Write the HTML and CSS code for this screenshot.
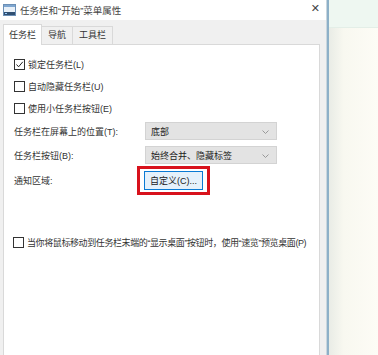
FILE: index.html
```html
<!DOCTYPE html>
<html>
<head>
<meta charset="utf-8">
<title>任务栏和“开始”菜单属性</title>
<link rel="stylesheet" href="styles.css">
</head>
<body>
<div class="screen">
  <div class="dialog">
    <div class="titlebar">
      <svg class="appicon" width="13" height="12" viewBox="0 0 13 12">
        <rect x="0.5" y="0.5" width="12" height="11" fill="#e8f0f8" stroke="#6b8fb5"/>
        <rect x="1" y="1" width="11" height="2" fill="#7ea6d0"/>
        <rect x="1" y="8" width="11" height="3" fill="#2f4f72"/>
        <rect x="2" y="9" width="2" height="1" fill="#9fd0ff"/>
      </svg>
      <span class="title">任务栏和“开始”菜单属性</span>
      <span class="close">✕</span>
    </div>
    <div class="body">
      <div class="tabs">
        <span class="tab active">任务栏</span>
        <span class="tab">导航</span>
        <span class="tab">工具栏</span>
      </div>
      <div class="panel">
        <div class="check"><span class="box"><svg width="9" height="9" viewBox="0 0 9 9"><path d="M1.5 4.5 L3.6 6.8 L7.8 1.8" fill="none" stroke="#222" stroke-width="1"/></svg></span>锁定任务栏(L)</div>
        <div class="check"><span class="box"></span>自动隐藏任务栏(U)</div>
        <div class="check"><span class="box"></span>使用小任务栏按钮(E)</div>

        <div class="row">
          <span class="label">任务栏在屏幕上的位置(T):</span>
          <span class="select">底部<svg class="chev" width="7" height="4" viewBox="0 0 7 4"><path d="M0.5 0.5 L3.5 3.5 L6.5 0.5" fill="none" stroke="#999"/></svg></span>
        </div>
        <div class="row">
          <span class="label">任务栏按钮(B):</span>
          <span class="select">始终合并、隐藏标签<svg class="chev" width="7" height="4" viewBox="0 0 7 4"><path d="M0.5 0.5 L3.5 3.5 L6.5 0.5" fill="none" stroke="#999"/></svg></span>
        </div>
        <div class="row notify">
          <span class="label">通知区域:</span>
          <span class="highlight"><span class="button">自定义(C)...</span></span>
        </div>

        <div class="check peek"><span class="box"></span>当你将鼠标移动到任务栏末端的“显示桌面”按钮时，使用“速览”预览桌面(P)</div>
      </div>
    </div>
  </div>
  <div class="edge"></div>
  <div class="outside">
    <div class="strip"></div>
  </div>
</div>
</body>
</html>
```
FILE: styles.css
```css
html, body {
	margin: 0;
	height: 100%;
	overflow: hidden;
}

body {
	font-family: "Liberation Sans", "Noto Sans CJK SC", sans-serif;
	font-size: 9px;
	color: #333;
}

.screen {
	display: flex;
	height: 355px;
}

.dialog {
	width: 326px;
	display: flex;
	flex-direction: column;
	background: #f0f0f0;
}

.titlebar {
	height: 20px;
	background: #fff;
	display: flex;
	align-items: center;
	padding-left: 3px;
	position: relative;
}

.appicon {
	margin-right: 4px;
}

.title {
	font-size: 9.5px;
	color: #444;
}

.close {
	position: absolute;
	right: 6px;
	top: 2px;
	font-size: 11px;
	color: #444;
	font-family: "DejaVu Sans", sans-serif;
}

.body {
	flex: 1;
	display: flex;
	flex-direction: column;
	padding: 4px 6px 0 3px;
}

.tabs {
	display: flex;
	height: 20px;
	align-items: flex-end;
}

.tab {
	height: 17px;
	line-height: 17px;
	padding: 0 6px;
	border: 1px solid #d9d9d9;
	border-bottom: none;
	margin-left: -1px;
	background: #f0f0f0;
	color: #333;
}

.tab.active {
	height: 20px;
	line-height: 20px;
	background: #fff;
	margin-left: 0;
	padding: 0 5px;
	position: relative;
	z-index: 1;
	margin-bottom: -1px;
}

.panel {
	flex: 1;
	background: #fff;
	border: 1px solid #d9d9d9;
	border-bottom: none;
	padding: 8px 0 0 10px;
}

.check {
	display: flex;
	align-items: center;
	height: 22px;
}

.box {
	width: 9px;
	height: 9px;
	border: 1px solid #333;
	background: #fff;
	margin-right: 3px;
	display: flex;
	align-items: center;
	justify-content: center;
}

.row {
	display: flex;
	align-items: center;
	height: 24px;
}

.row:first-of-type {
	margin-top: 3px;
}

.label {
	width: 131px;
	flex-shrink: 0;
}

.select {
	width: 125px;
	height: 16px;
	background: #e3e3e3;
	border: 1px solid #d3d3d3;
	display: flex;
	align-items: center;
	padding-left: 5px;
	position: relative;
	color: #222;
}

.chev {
	position: absolute;
	right: 7px;
	top: 7px;
}

.notify {
	height: 26px;
}

.highlight {
	border: 3px solid #d8121c;
	padding: 2px 4px;
	margin-left: -8px;
	display: flex;
}

.button {
	width: 57px;
	height: 17px;
	background: #e5f1fb;
	border: 1px solid #0a7ad4;
	display: flex;
	align-items: center;
	justify-content: center;
	color: #222;
}

.peek {
	margin-top: 38px;
	margin-left: -1px;
	letter-spacing: -0.4px;
}

.edge {
	width: 2px;
	background: #8db0c8;
	border-left: 1px solid #c9d6de;
}

.outside {
	flex: 1;
	background: linear-gradient(to right, #e9ece6, #f8f8f0 30%, #fdfcf6);
}

.strip {
	height: 27px;
	background: #eef7f1;
	border-bottom: 1px solid #e3eee7;
}
```
